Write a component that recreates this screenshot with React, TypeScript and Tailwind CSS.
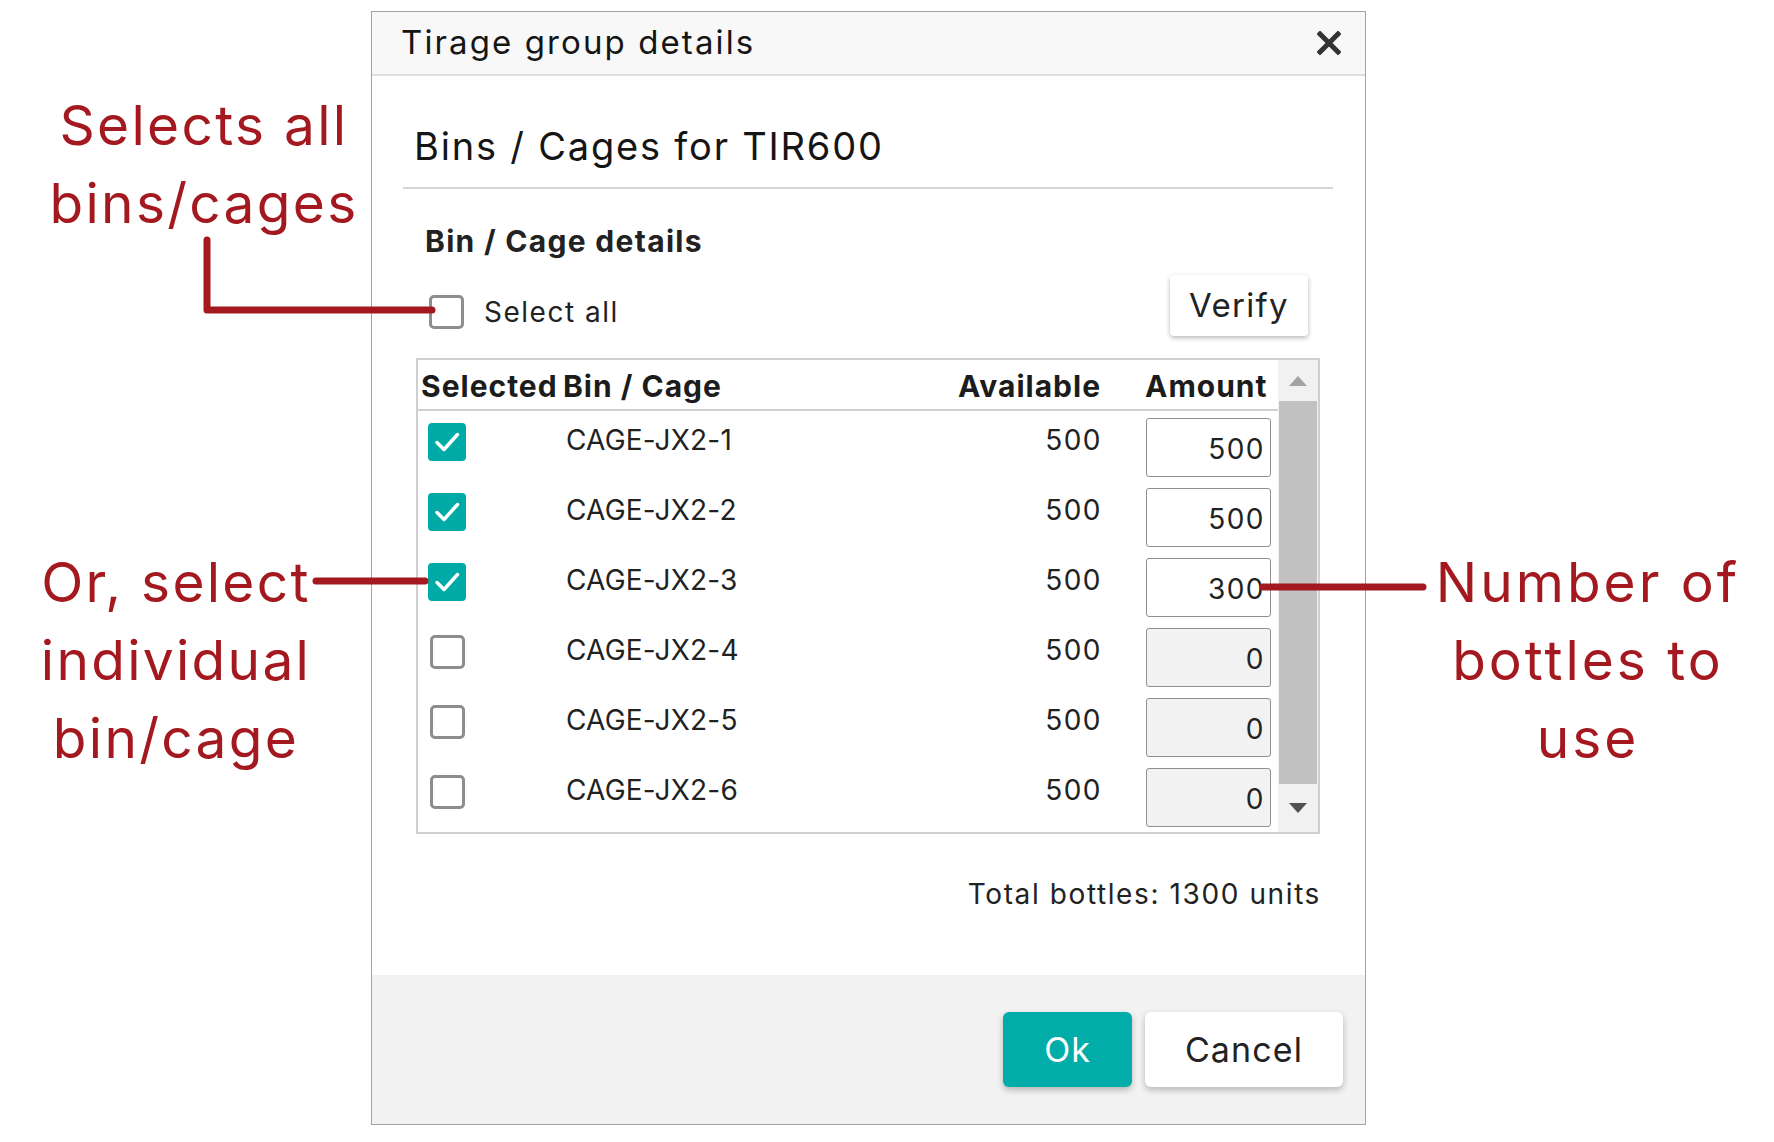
import React from "react";

const rows = [
  { name: "CAGE-JX2-1", available: 500, amount: "500", checked: true },
  { name: "CAGE-JX2-2", available: 500, amount: "500", checked: true },
  { name: "CAGE-JX2-3", available: 500, amount: "300", checked: true },
  { name: "CAGE-JX2-4", available: 500, amount: "0", checked: false },
  { name: "CAGE-JX2-5", available: 500, amount: "0", checked: false },
  { name: "CAGE-JX2-6", available: 500, amount: "0", checked: false },
];

function Box({ checked }: { checked: boolean }) {
  if (checked) {
    return (
      <div className="w-[38px] h-[38px] rounded-[4px] bg-[#00aba7] flex items-center justify-center">
        <svg width="28" height="28" viewBox="0 0 28 28">
          <path d="M4 14.5 L11 21.5 L24.5 6.5" fill="none" stroke="#fff" strokeWidth="3.5" strokeLinecap="round" strokeLinejoin="round" />
        </svg>
      </div>
    );
  }
  return <div className="w-[35px] h-[34px] rounded-[5px] border-[3px] border-[#8d8d8d] bg-white" />;
}

export default function App() {
  return (
    <div className="relative w-[1774px] h-[1142px] bg-white flex font-['Inter',sans-serif] text-[#222]">
      {/* left notes */}
      <div className="w-[371px] shrink-0 flex flex-col text-[#a3191f] text-[55px] leading-[78px] tracking-[2.3px]">
        <div className="ml-[24px] w-[360px] mt-[86px] text-center">
          Selects all
          <br />
          bins/cages
        </div>
        <div className="ml-[16px] w-[320px] mt-[301px] text-center">
          Or, select
          <br />
          individual
          <br />
          bin/cage
        </div>
      </div>

      {/* dialog */}
      <div className="w-[995px] h-[1114px] mt-[11px] shrink-0 border border-[#a3a3a3] flex flex-col bg-white">
        <div className="h-[64px] bg-[#f8f8f8] border-b-2 border-[#dedede] flex items-center justify-between pl-[29px] pr-[24px]">
          <span className="text-[33px] text-[#151515] tracking-[2.1px]">Tirage group details</span>
          <svg width="24" height="24" viewBox="0 0 24 24">
            <path d="M3 3 L21 21 M21 3 L3 21" stroke="#333" strokeWidth="5" strokeLinecap="square" />
          </svg>
        </div>

        <div className="flex-1 flex flex-col px-[31px] pr-[32px]">
          <h2 className="pl-[11px] pt-[46px] text-[38px] leading-[48px] text-[#151515] tracking-[1.8px]">
            Bins / Cages for TIR600
          </h2>
          <div className="mt-[17px] border-t-2 border-[#d4d4d4]" />

          <div className="pl-[22px] mt-[34px] text-[30px] leading-[36px] font-bold text-[#222] tracking-[1.3px]">
            Bin / Cage details
          </div>

          <div className="mt-[16px] h-[61px] flex items-center justify-between pl-[26px] pr-[25px]">
            <div className="flex items-center gap-[20px] mt-[12px]">
              <Box checked={false} />
              <span className="text-[28px] leading-[34px] tracking-[1.5px]">Select all</span>
            </div>
            <button className="w-[138px] h-[61px] rounded-[4px] bg-white shadow-[0_2px_5px_rgba(0,0,0,0.28)] text-[33px] text-[#222] tracking-[1.3px]">
              Verify
            </button>
          </div>

          <div className="mt-[22px] mx-[13px] h-[476px] border-2 border-[#cfcfcf] flex">
            <div className="flex-1 flex flex-col">
              <div className="h-[51px] pt-[3px] border-b-2 border-[#d0d0d0] flex items-center font-bold text-[30px] tracking-[1px] text-[#1c1c1c]">
                <div className="w-[145px] pl-[3px]">Selected</div>
                <div className="flex-1">Bin / Cage</div>
                <div className="w-[200px] text-right pr-[1px]">Available</div>
                <div className="w-[176px] pl-[43px]">Amount</div>
              </div>
              {rows.map((r) => (
                <div key={r.name} className="h-[70px] flex items-start text-[28px] leading-[34px]">
                  <div className={r.checked ? "w-[145px] pl-[10px] pt-[12px]" : "w-[145px] pl-[12px] pt-[14px]"}>
                    <Box checked={r.checked} />
                  </div>
                  <div className="flex-1 pl-[3px] pt-[12px] tracking-[0.2px]">{r.name}</div>
                  <div className="w-[200px] text-right pr-[0px] pt-[12px] tracking-[1.5px]">{r.available}</div>
                  <div className="w-[176px] pl-[44px] pt-[7px]">
                    <div
                      className={
                        r.checked
                          ? "w-[125px] h-[59px] rounded-[3px] border border-[#8f8f8f] bg-white flex items-center justify-end pr-[5px] pt-[3px] tracking-[1.5px]"
                          : "w-[125px] h-[59px] rounded-[3px] border border-[#8f8f8f] bg-[#f2f2f2] flex items-center justify-end pr-[5px] pt-[3px] tracking-[1.5px]"
                      }
                    >
                      {r.amount}
                    </div>
                  </div>
                </div>
              ))}
            </div>
            <div className="w-[40px] bg-[#f1f1f1] flex flex-col">
              <div className="h-[41px] flex items-center justify-center">
                <svg width="20" height="12" viewBox="0 0 20 12">
                  <path d="M10 1 L19 11 L1 11 Z" fill="#a3a3a3" />
                </svg>
              </div>
              <div className="h-[383px] mx-[1px] bg-[#c1c1c1]" />
              <div className="flex-1 flex items-center justify-center">
                <svg width="20" height="12" viewBox="0 0 20 12">
                  <path d="M1 1 L19 1 L10 11 Z" fill="#505050" />
                </svg>
              </div>
            </div>
          </div>

          <div className="mt-[43px] pr-[12px] text-right text-[28px] leading-[34px] tracking-[1.6px]">
            Total bottles: 1300 units
          </div>
        </div>

        <div className="h-[149px] bg-[#f2f2f2] flex items-start justify-end gap-[13px] pt-[37px] pr-[22px]">
          <button className="w-[129px] h-[75px] rounded-[6px] bg-[#02ada9] text-white text-[34px] tracking-[1px] shadow-[0_3px_6px_rgba(0,0,0,0.25)]">
            Ok
          </button>
          <button className="w-[198px] h-[75px] rounded-[6px] bg-white text-[#222] text-[34px] tracking-[1.1px] shadow-[0_3px_6px_rgba(0,0,0,0.25)]">
            Cancel
          </button>
        </div>
      </div>

      {/* right note */}
      <div className="flex-1 text-[#a3191f] text-[55px] leading-[78px] tracking-[3px]">
        <div className="ml-[42px] w-[360px] mt-[543px] text-center">
          Number of
          <br />
          bottles to
          <br />
          use
        </div>
      </div>

      {/* callout lines */}
      <svg className="absolute inset-0 pointer-events-none" width="1774" height="1142">
        <g stroke="#a3191f" strokeWidth="7" strokeLinecap="round" strokeLinejoin="round" fill="none">
          <polyline points="207,240 207,310 432,310" />
          <line x1="316" y1="581" x2="425" y2="581" />
          <line x1="1263" y1="587" x2="1423" y2="587" />
        </g>
      </svg>
    </div>
  );
}
